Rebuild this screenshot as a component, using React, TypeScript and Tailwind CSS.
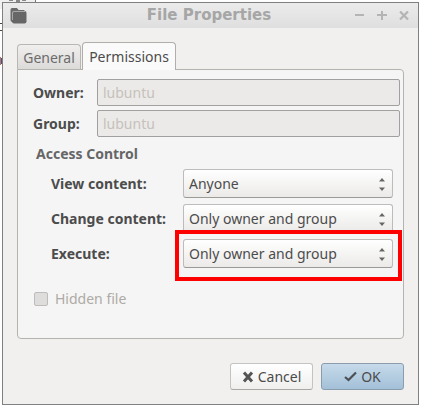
import { useState } from "react";

const accessRows = [
  { id: "view", label: "View content:", value: "Anyone" },
  { id: "change", label: "Change content:", value: "Only owner and group" },
  { id: "execute", label: "Execute:", value: "Only owner and group" },
];

const choices = ["Anyone", "Only owner", "Only owner and group", "Nobody"];

function TitleBar() {
  return (
    <header className="flex items-center h-[25px] pl-[7px] pr-[9px] bg-linear-to-b from-[#ebebeb] to-[#dfdfdf]">
      <svg className="w-[17px] h-[17px]" viewBox="0 0 17 17">
        <path d="M2 1h5l1.5 2H14l.8 1H4.5Q2 4 2 6.5V15Q.5 14.500 .5 13V3Q.5 1 2 1z" fill="#6b6b6b" />
        <rect x="2" y="4" width="14.500" height="12.500" rx="2" fill="#666" />
        <path d="M2.500 13V6Q2.500 4.500 4 4.500H15" fill="none" stroke="#a8a8a8" />
      </svg>
      <h1 className="flex-1 pl-9 text-center text-[15px] leading-[25px] font-bold text-[#a6a6a6] [font-family:'DejaVu_Sans',sans-serif]">
        File Properties
      </h1>
      <div className="flex gap-3">
        <button aria-label="Minimize">
          <svg className="w-[10px] h-[10px]" viewBox="0 0 10 10">
            <path d="M0 4h9" stroke="#b4b4b4" strokeWidth="2" />
          </svg>
        </button>
        <button aria-label="Maximize">
          <svg className="w-[10px] h-[10px]" viewBox="0 0 10 10">
            <path d="M0 4h10M5 -1v10" stroke="#b4b4b4" strokeWidth="2" />
          </svg>
        </button>
        <button aria-label="Close">
          <svg className="w-[10px] h-[10px]" viewBox="0 0 10 10">
            <path d="M1 .5l8 8M9 .5l-8 8" stroke="#b4b4b4" strokeWidth="2.200" />
          </svg>
        </button>
      </div>
    </header>
  );
}

function AccessRow({ row }: { row: (typeof accessRows)[number] }) {
  const [value, setValue] = useState(row.value);
  return (
    <div className="relative flex items-center">
      <label htmlFor={row.id} className="w-[132px] shrink-0 font-bold">
        {row.label}
      </label>
      <div className="relative flex-1">
        <select
          id={row.id}
          value={value}
          onChange={(e) => setValue(e.target.value)}
          className="block w-full h-[29px] appearance-none rounded-[3px] border border-[#bdbcba] border-b-[#9c9a96] bg-linear-to-b from-white to-[#ebeae8] pl-[5px] pr-6"
        >
          {choices.map((choice) => (
            <option key={choice}>{choice}</option>
          ))}
        </select>
        <svg
          className="pointer-events-none absolute right-2 top-[9px] w-[6px] h-[13px]"
          viewBox="0 0 6 13"
          fill="#666"
        >
          <path d="M0 3.500L3 0l3 3.500zM0 9.500h6L3 13z" />
        </svg>
      </div>
      {row.id === "execute" && (
        <div className="pointer-events-none absolute -top-[9px] left-[124px] -right-[9px] -bottom-[13px] border-4 border-[#ff0000]" />
      )}
    </div>
  );
}

export default function App() {
  return (
    <div className="relative bg-white pt-[2px] pl-[2px] pr-1 pb-[2px] text-[14px] leading-5 text-[#4c4c4c] [font-family:'Noto_Sans',sans-serif]">
      {/* edges of the window behind */}
      <div className="absolute left-0 top-0 h-[9px] w-9 border-r border-[#777] bg-[#efefef]" />
      <svg className="absolute left-0 top-0 w-7 h-[66px]" viewBox="0 0 28 66">
        <path d="M9 0h4v1H9zM16 0h4v2h-4zM22 0h4v1h-4z" fill="#888" />
        <path d="M0 23.500h2M0 30.500h2" stroke="#444" />
        <path d="M0 57h1v8H0z" fill="#c87050" />
        <path d="M1 58h1v6H1z" fill="#3455a0" />
      </svg>

      <main className="relative border border-[#808080] bg-[#f1f0ee]">
        <TitleBar />
        <div className="px-[14px] pt-[14px] pb-[14px]">
          <div role="tablist" className="relative flex items-end gap-px">
            <button
              role="tab"
              aria-selected={false}
              className="mb-px h-[25px] w-[64px] rounded-t border border-b-0 border-[#b9b7b3] bg-linear-to-b from-[#f0efed] to-[#dcdbd9] pt-px text-[#6c6c6c]"
            >
              General
            </button>
            <button
              role="tab"
              aria-selected
              className="h-[28px] w-[94px] rounded-t border border-b-0 border-[#b0aea8] bg-[#fafafa]"
            >
              Permissions
            </button>
          </div>
          <section className="-mt-px rounded-b rounded-tr border border-[#b5b3ad] bg-[#f5f5f5] pt-[9px] pr-[3px] pl-[15px] pb-[29px]">
            <div className="flex items-center">
              <label htmlFor="owner" className="w-16 shrink-0 font-bold">
                Owner:
              </label>
              <input
                id="owner"
                disabled
                defaultValue="lubuntu"
                className="h-[27px] min-w-0 flex-1 rounded-xs border border-[#a0a0a0] bg-[#ebeae8] px-[5px] text-[#c6c1bb]"
              />
            </div>
            <div className="mt-1 flex items-center">
              <label htmlFor="group" className="w-16 shrink-0 font-bold">
                Group:
              </label>
              <input
                id="group"
                disabled
                defaultValue="lubuntu"
                className="h-[27px] min-w-0 flex-1 rounded-xs border border-[#a0a0a0] bg-[#ebeae8] px-[5px] text-[#c6c1bb]"
              />
            </div>
            <h2 className="mt-[7px] pl-[3px] font-bold text-[#666]">Access Control</h2>
            <div className="mt-[5px] flex flex-col gap-[6px] pl-[18px] pr-[7px]">
              {accessRows.map((row) => (
                <AccessRow key={row.id} row={row} />
              ))}
            </div>
            <label className="mt-[21px] flex items-center gap-[7px] pl-px text-[#aeaaa5]">
              <input
                type="checkbox"
                disabled
                className="h-[14px] w-[14px] appearance-none rounded-xs border border-[#bebcb9] bg-[#dedddb]"
              />
              Hidden file
            </label>
          </section>
          <footer className="mt-6 flex justify-end gap-2">
            <button className="flex h-[27px] w-[83px] items-center justify-center gap-1 rounded-[3px] border border-[#c4c3c1] border-b-[#a9a8a5] bg-linear-to-b from-white to-[#f0efee]">
              <svg className="w-3 h-3" viewBox="0 0 12 12">
                <path d="M2 1.500l8 9M10 1.500l-8 9" stroke="#555" strokeWidth="3" />
              </svg>
              Cancel
            </button>
            <button className="flex h-[27px] w-[83px] items-center justify-center gap-1 rounded-[3px] border border-[#8a9daf] bg-linear-to-b from-[#c6daea] to-[#a3c0d8]">
              <svg className="w-[13px] h-[11px]" viewBox="0 0 13 11">
                <path d="M1 6l3.500 3L12 1.500" fill="none" stroke="#4c5054" strokeWidth="2.200" />
              </svg>
              OK
            </button>
          </footer>
        </div>
      </main>
    </div>
  );
}
